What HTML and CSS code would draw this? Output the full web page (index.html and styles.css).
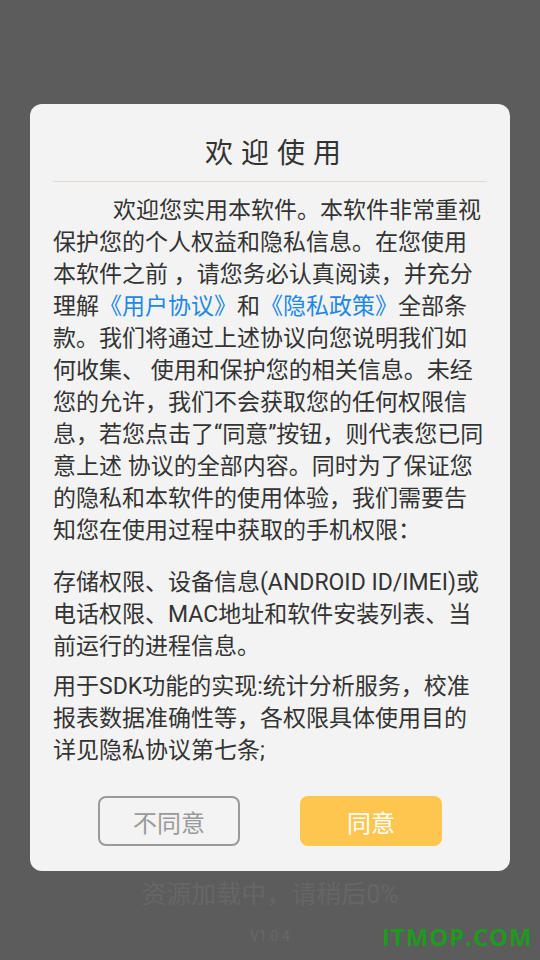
FILE: index.html
```html
<!DOCTYPE html>
<html lang="zh-CN">
<head>
<meta charset="utf-8">
<title>欢迎使用</title>
<link rel="stylesheet" href="styles.css">
</head>
<body>
<div class="screen">
  <div class="dialog">
    <h1 class="title">欢迎使用</h1>
    <div class="divider"></div>
    <div class="content">
      <p class="para first">欢迎您实用本软件。本软件非常重视<br>保护您的个人权益和隐私信息。在您使用<br>本软件之前 ，请您务必认真阅读，并充分<br>理解<a class="link">《用户协议》</a>和<a class="link">《隐私政策》</a>全部条<br>款。我们将通过上述协议向您说明我们如<br>何收集、 使用和保护您的相关信息。未经<br>您的允许，我们不会获取您的任何权限信<br>息，若您点击了“同意”按钮，则代表您已同<br>意上述 协议的全部内容。同时为了保证您<br>的隐私和本软件的使用体验，我们需要告<br>知您在使用过程中获取的手机权限：</p>
      <p class="para second">存储权限、设备信息(ANDROID ID/IMEI)或<br>电话权限、MAC地址和软件安装列表、当<br>前运行的进程信息。</p>
      <p class="para third">用于SDK功能的实现:统计分析服务，校准<br>报表数据准确性等，各权限具体使用目的<br>详见隐私协议第七条;</p>
    </div>
    <div class="actions">
      <button class="btn btn-disagree">不同意</button>
      <button class="btn btn-agree">同意</button>
    </div>
  </div>
  <div class="loading">资源加载中，请稍后0%</div>
  <div class="footer">
    <span class="version">V1.0.4</span>
    <span class="watermark">ITMOP.COM</span>
  </div>
</div>
</body>
</html>
```

FILE: styles.css
```css
html, body {
  margin: 0;
  padding: 0;
  background: #5c5c5c;
}

body {
  font-family: Roboto, "Noto Sans CJK SC", sans-serif;
}

.screen {
  width: 540px;
  height: 960px;
  overflow: hidden;
  padding-top: 104px;
  box-sizing: border-box;
}

.dialog {
  margin: 0 30px;
  width: 480px;
  box-sizing: border-box;
  background: #f3f3f3;
  border-radius: 12px;
  padding: 30px 23px 25px;
}

.title {
  margin: 0;
  height: 40px;
  line-height: 40px;
  font-size: 28px;
  font-weight: normal;
  color: #333333;
  text-align: center;
  letter-spacing: 8px;
  padding-left: 14px;
}

.divider {
  height: 1px;
  background: #e3d9d1;
  margin-top: 7px;
}

.content {
  margin-top: 13px;
  color: #333333;
  font-size: 23px;
  line-height: 32px;
}

.para {
  margin: 0;
  white-space: nowrap;
}

.para.first {
  text-indent: 60px;
}

.para.second {
  margin-top: 20px;
}

.para.third {
  margin-top: 8px;
}

.link {
  color: #1e88e5;
  text-decoration: none;
}

.actions {
  display: flex;
  justify-content: center;
  gap: 60px;
  margin-top: 29px;
}

.btn {
  width: 142px;
  height: 50px;
  box-sizing: border-box;
  border-radius: 8px;
  font-family: Roboto, "Noto Sans CJK SC", sans-serif;
  font-size: 24px;
  padding: 0;
}

.btn-disagree {
  background: transparent;
  border: 2px solid #9a9a9a;
  color: #9a9a9a;
}

.btn-agree {
  background: #ffc64f;
  border: none;
  color: #ffffff;
}

.loading {
  margin-top: 9px;
  text-align: center;
  font-size: 25px;
  line-height: 30px;
  color: #666666;
}

.footer {
  position: relative;
  height: 48px;
  text-align: center;
}

.version {
  display: inline-block;
  margin-top: 18px;
  font-size: 14px;
  color: #686868;
}

.watermark {
  position: absolute;
  left: 382px;
  top: 15px;
  font-family: "Open Sans", sans-serif;
  font-weight: 700;
  font-size: 24px;
  line-height: 24px;
  color: #1f991f;
  letter-spacing: 0.9px;
}
```
